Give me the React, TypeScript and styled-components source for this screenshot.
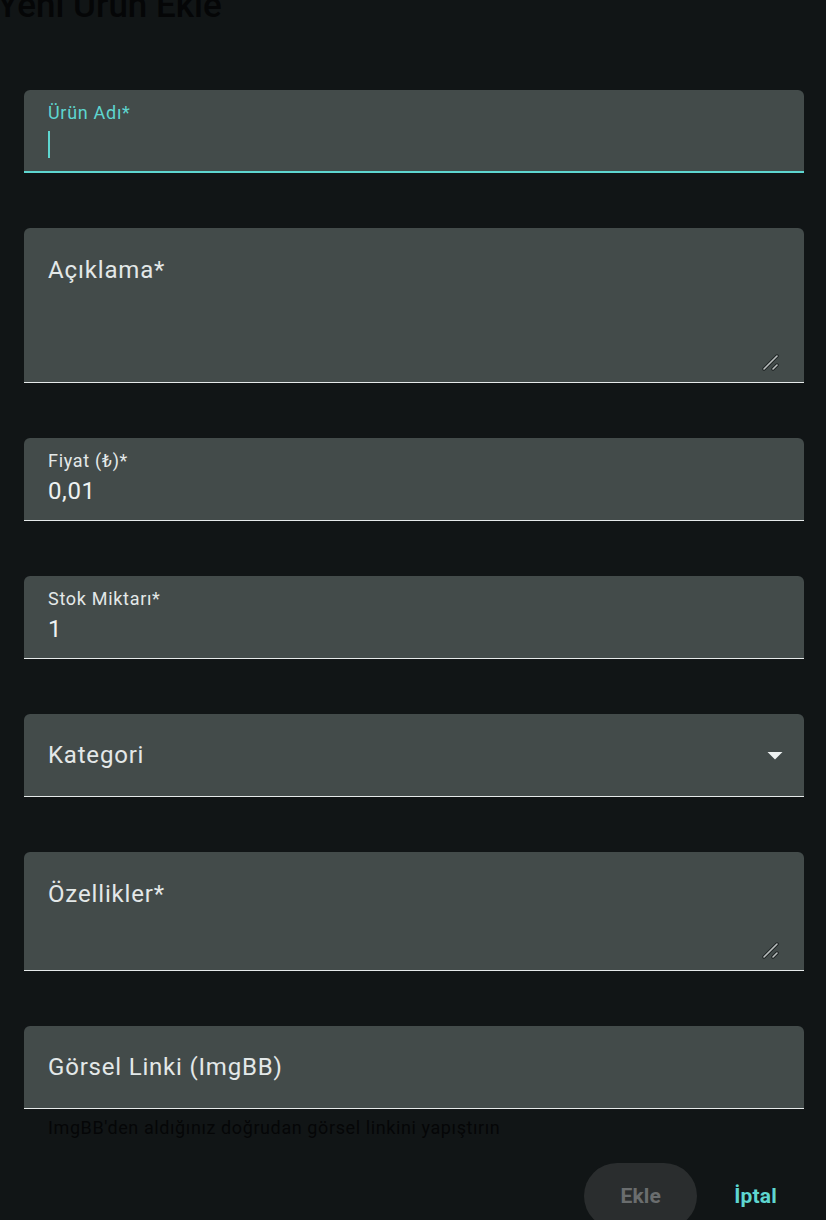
import React from 'react';
import styled, { createGlobalStyle } from 'styled-components';

const ACCENT = '#5ed6d0';

const GlobalStyle = createGlobalStyle`
  html, body {
    margin: 0;
    padding: 0;
    background: #111516;
    font-family: Roboto, 'Noto Sans', 'Liberation Sans', sans-serif;
  }
  * { box-sizing: border-box; }
`;

const Page = styled.div`
  width: 826px;
  height: 1220px;
  overflow: hidden;
  background: #111516;
`;

const Title = styled.h1`
  margin: -14px 0 0 -3px;
  height: 48px;
  font-size: 35px;
  font-weight: 500;
  line-height: 40px;
  color: #050607;
`;

const Form = styled.form`
  display: flex;
  flex-direction: column;
  gap: 55px;
  padding: 56px 22px 0 24px;
`;

const Field = styled.div<{ $height: number; $focused?: boolean }>`
  position: relative;
  height: ${p => p.$height}px;
  background: #434b4a;
  border-radius: 6px 6px 0 0;
  border-bottom: ${p => (p.$focused ? `2px solid ${ACCENT}` : '1px solid #e6eaea')};
  padding: 0 24px;
  display: flex;
  flex-direction: column;
`;

const SmallLabel = styled.label<{ $focused?: boolean }>`
  display: block;
  margin-top: 11px;
  font-size: 18px;
  line-height: 24px;
  letter-spacing: 0.7px;
  color: ${p => (p.$focused ? ACCENT : '#e3e8e8')};
`;

const BigLabel = styled.label`
  display: block;
  margin-top: 27px;
  font-size: 24px;
  line-height: 30px;
  letter-spacing: 0.85px;
  color: #e3e8e8;
`;

const InputRow = styled.div`
  display: flex;
  align-items: center;
  height: 38px;
`;

const Caret = styled.span`
  width: 2px;
  height: 27px;
  background: ${ACCENT};
`;

const Input = styled.input`
  width: 100%;
  height: 36px;
  padding: 0;
  border: none;
  outline: none;
  background: transparent;
  font-family: inherit;
  font-size: 24px;
  letter-spacing: 0.6px;
  color: #eef2f2;
`;

const TextArea = styled.textarea<{ $height: number }>`
  display: block;
  width: 100%;
  height: ${p => p.$height}px;
  padding: 0;
  border: none;
  outline: none;
  background: transparent;
  resize: none;
  font-family: inherit;
  font-size: 24px;
  color: #eef2f2;
`;

const Grip = styled.svg`
  position: absolute;
  right: 24px;
  bottom: 11px;
  width: 18px;
  height: 18px;
`;

const SelectRow = styled.div`
  display: flex;
  align-items: center;
  justify-content: space-between;
  height: 100%;
`;

const SelectText = styled.span`
  font-size: 24px;
  letter-spacing: 0.8px;
  color: #e3e8e8;
`;

const ArrowIcon = styled.svg`
  width: 36px;
  height: 36px;
  margin-right: -13px;
  fill: #eef2f2;
`;

const Group = styled.div`
  display: flex;
  flex-direction: column;
`;

const Helper = styled.p`
  margin: 8px 0 0 24px;
  font-size: 18px;
  line-height: 22px;
  letter-spacing: 0.6px;
  color: #050607;
`;

const Actions = styled.div`
  display: flex;
  justify-content: flex-end;
  align-items: center;
  gap: 10px;
  margin-top: -31px;
`;

const Button = styled.button<{ $variant: 'filled' | 'text' }>`
  height: 66px;
  padding: 0 ${p => (p.$variant === 'filled' ? '36px' : '27px')};
  min-width: ${p => (p.$variant === 'filled' ? '111px' : '96px')};
  border: none;
  border-radius: 33px;
  font-family: inherit;
  font-size: 21px;
  font-weight: 700;
  letter-spacing: 0.2px;
  background: ${p => (p.$variant === 'filled' ? '#2a2d2e' : 'transparent')};
  color: ${p => (p.$variant === 'filled' ? '#6a6d6e' : ACCENT)};
`;

function ResizeGrip() {
  return (
    <Grip viewBox="0 0 18 18">
      <g strokeLinecap="round">
        <path d="M2 16 L15 3" stroke="#1d2222" strokeWidth={3.4} />
        <path d="M11 16 L15 12" stroke="#1d2222" strokeWidth={3.4} />
        <path d="M2 16 L15 3" stroke="#b9bebe" strokeWidth={1.6} />
        <path d="M11 16 L15 12" stroke="#b9bebe" strokeWidth={1.6} />
      </g>
    </Grip>
  );
}

export default function App() {
  return (
    <Page>
      <GlobalStyle />
      <Title>Yeni Ürün Ekle</Title>
      <Form onSubmit={e => e.preventDefault()}>
        <Field $height={83} $focused>
          <SmallLabel $focused>Ürün Adı*</SmallLabel>
          <InputRow>
            <Caret />
          </InputRow>
        </Field>

        <Field $height={155}>
          <BigLabel>Açıklama*</BigLabel>
          <TextArea $height={86} />
          <ResizeGrip />
        </Field>

        <Field $height={83}>
          <SmallLabel>Fiyat (₺)*</SmallLabel>
          <Input value="0,01" readOnly />
        </Field>

        <Field $height={83}>
          <SmallLabel>Stok Miktarı*</SmallLabel>
          <Input value="1" readOnly />
        </Field>

        <Field $height={83}>
          <SelectRow>
            <SelectText>Kategori</SelectText>
            <ArrowIcon viewBox="0 0 24 24">
              <path d="M7 10l5 5 5-5z" />
            </ArrowIcon>
          </SelectRow>
        </Field>

        <Field $height={119}>
          <BigLabel>Özellikler*</BigLabel>
          <TextArea $height={50} />
          <ResizeGrip />
        </Field>

        <Group>
          <Field $height={83}>
            <SelectRow>
              <SelectText>Görsel Linki (ImgBB)</SelectText>
            </SelectRow>
          </Field>
          <Helper>ImgBB'den aldığınız doğrudan görsel linkini yapıştırın</Helper>
        </Group>

        <Actions>
          <Button type="submit" $variant="filled" disabled>
            Ekle
          </Button>
          <Button type="button" $variant="text">
            İptal
          </Button>
        </Actions>
      </Form>
    </Page>
  );
}
